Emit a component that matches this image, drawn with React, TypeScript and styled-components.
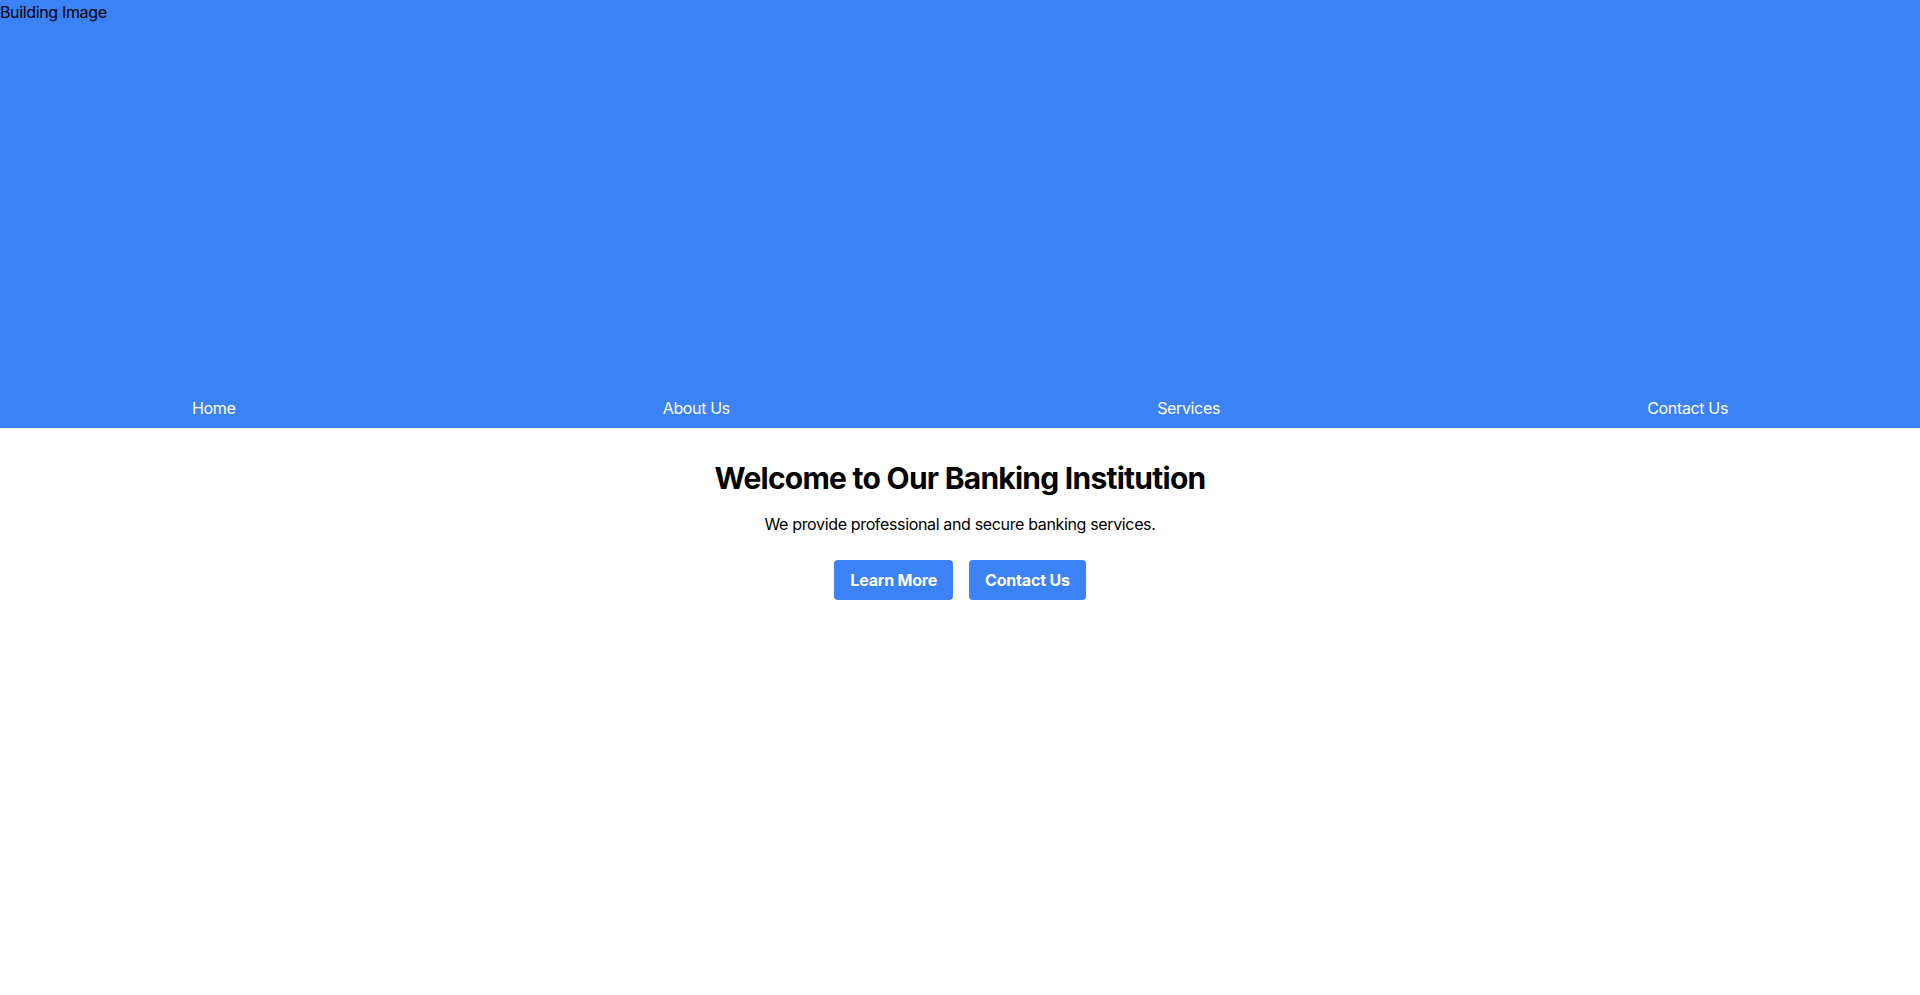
import React from "react";
import styled, { createGlobalStyle } from "styled-components";

const GlobalStyle = createGlobalStyle`
  html, body {
    margin: 0;
    padding: 0;
    background: #ffffff;
  }
  body {
    font-family: Inter, "Noto Sans", "Liberation Sans", sans-serif;
    font-size: 16px;
    line-height: 24px;
    letter-spacing: -0.35px;
    color: #000000;
  }
  * { box-sizing: border-box; }
`;

const Header = styled.header`
  background: #3b82f6;
`;

const HeroImage = styled.div`
  height: 384px;
  color: #000000;
  font-size: 16px;
  line-height: 24px;
`;

const Nav = styled.nav`
  padding: 12px 0 8px;
`;

const NavList = styled.ul`
  list-style: none;
  margin: 0 auto;
  padding: 0;
  max-width: 1536px;
  display: flex;
  justify-content: space-between;
`;

const NavLink = styled.a`
  color: #ffffff;
  text-decoration: none;
  font-size: 16px;
  line-height: 24px;
`;

const Hero = styled.section`
  padding: 32px 16px;
  text-align: center;
`;

const Title = styled.h1`
  margin: 0 0 16px;
  font-size: 30px;
  line-height: 36px;
  font-weight: 700;
  letter-spacing: -0.75px;
  color: #000000;
`;

const Lead = styled.p`
  margin: 0 0 24px;
  font-size: 16px;
  line-height: 24px;
`;

const Actions = styled.div`
  display: flex;
  justify-content: center;
  gap: 16px;
`;

const Button = styled.button`
  font-family: inherit;
  background: #3b82f6;
  color: #ffffff;
  border: none;
  border-radius: 4px;
  padding: 8px 16px;
  font-size: 16px;
  line-height: 24px;
  font-weight: 700;
  letter-spacing: -0.2px;
  cursor: pointer;
`;

const links = ["Home", "About Us", "Services", "Contact Us"];

export default function App() {
  return (
    <>
      <GlobalStyle />
      <Header>
        <HeroImage role="img" aria-label="Building Image">
          Building Image
        </HeroImage>
        <Nav>
          <NavList>
            {links.map((l) => (
              <li key={l}>
                <NavLink href="#">{l}</NavLink>
              </li>
            ))}
          </NavList>
        </Nav>
      </Header>
      <Hero>
        <Title>Welcome to Our Banking Institution</Title>
        <Lead>We provide professional and secure banking services.</Lead>
        <Actions>
          <Button>Learn More</Button>
          <Button>Contact Us</Button>
        </Actions>
      </Hero>
    </>
  );
}
